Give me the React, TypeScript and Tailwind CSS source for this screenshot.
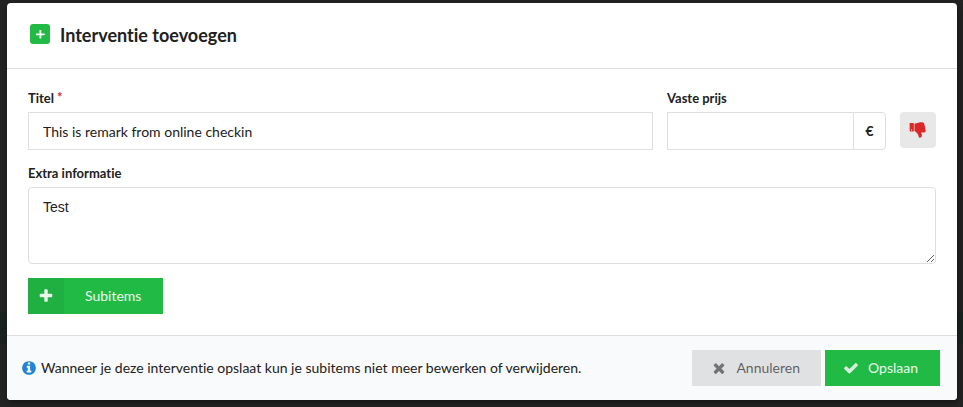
import type { ReactNode } from "react";

function Glyph({ className, children }: { className: string; children: ReactNode }) {
  return (
    <svg viewBox="0 0 1792 1792" fill="currentColor" aria-hidden="true" className={className}>
      {children}
    </svg>
  );
}

const plusPath =
  "M1600 736v192q0 40-28 68t-68 28h-416v416q0 40-28 68t-68 28h-192q-40 0-68-28t-28-68v-416h-416q-40 0-68-28t-28-68v-192q0-40 28-68t68-28h416v-416q0-40 28-68t68-28h192q40 0 68 28t28 68v416h416q40 0 68 28t28 68z";
const timesPath =
  "M1490 1322q0 40-28 68l-136 136q-28 28-68 28t-68-28l-294-294-294 294q-28 28-68 28t-68-28l-136-136q-28-28-28-68t28-68l294-294-294-294q-28-28-28-68t28-68l136-136q28-28 68-28t68 28l294 294 294-294q28-28 68-28t68 28l136 136q28 28 28 68t-28 68l-294 294 294 294q28 28 28 68z";
const checkPath =
  "M1671 566q0 40-28 68l-724 724-136 136q-28 28-68 28t-68-28l-136-136-362-362q-28-28-28-68t28-68l136-136q28-28 68-28t68 28l294 295 656-657q28-28 68-28t68 28l136 136q28 28 28 68z";
const infoPath =
  "M1152 1376v-160q0-14-9-23t-23-9h-96v-512q0-14-9-23t-23-9h-320q-14 0-23 9t-9 23v160q0 14 9 23t23 9h96v320h-96q-14 0-23 9t-9 23v160q0 14 9 23t23 9h448q14 0 23-9t9-23zm-128-896v-160q0-14-9-23t-23-9h-192q-14 0-23 9t-9 23v160q0 14 9 23t23 9h192q14 0 23-9t9-23zm640 416q0 209-103 385.5t-279.5 279.5-385.5 103-385.5-103-279.5-279.5-103-385.5 103-385.5 279.5-279.5 385.5-103 385.5 103 279.5 279.5 103 385.5z";
const cuffPath =
  "M320 896q0-26-19-45t-45-19q-27 0-45.500 19t-18.500 45q0 27 18.500 45.500t45.500 18.500q26 0 45-18.500t19-45.500zm160-640v720q0 26-19 45t-45 19h-288q-26 0-45-19t-19-45v-720q0-26 19-45t45-19h288q26 0 45 19t19 45z";
const handPath =
  "M1609 811q55 61 55 149-1 78-57.500 135t-134.500 57h-277q4 14 8 24t11 22 10 18q18 37 27 57t19 58.500 10 76.500q0 24-.5 39t-5 45-12 50-24 45-40 40.500-60 26-82.500 10.500q-26 0-45-19-20-20-34-50t-19.500-52-12.500-61q-9-42-13.500-60.500t-17.500-48.500-31-48q-33-33-101-120-49-64-101-121t-76-59q-25-2-43-20.500t-18-43.500v-641q0-26 19-44.500t45-19.500q35-1 158-44 77-26 120.500-39.500t121.500-29 144-15.500h129q133 2 197 78 58 69 49 181 39 37 54 94 17 61 0 117 46 61 43 137 0 32-15 76z";

const labelClass = "mb-1 block text-[13px] leading-[19px] font-bold";

export default function App() {
  return (
    <div className="relative isolate min-h-screen bg-[#242424] pt-[3px] pr-[6px] pb-[7px] pl-[7px] font-['Lato','Liberation_Sans',sans-serif] text-sm text-[#212121] [font-variant-ligatures:none]">
      <div className="absolute inset-x-0 top-[312px] -z-10 h-8 bg-[#1b2320]" />
      <div
        role="dialog"
        aria-labelledby="dialog-title"
        className="overflow-hidden rounded bg-white shadow-[1px_3px_3px_0_rgba(0,0,0,0.2),1px_3px_15px_2px_rgba(0,0,0,0.2)]"
      >
        <header className="flex items-start gap-[10px] border-b border-[#dededf] px-[23px] pt-[18px] pb-[19px]">
          <span className="mt-[3px] flex size-5 items-center justify-center rounded-[3px] bg-[#21ba45] text-white">
            <svg viewBox="0 0 20 20" className="size-5" fill="none" stroke="currentColor" strokeWidth="1.8" aria-hidden="true">
              <path d="M10.4 6v8.600M6.100 10.300h8.600" />
            </svg>
          </span>
          <h1 id="dialog-title" className="text-lg leading-7 font-bold">
            Interventie toevoegen
          </h1>
        </header>

        <form className="m-0" onSubmit={(e) => e.preventDefault()}>
          <div className="flex flex-col gap-[14px] px-[21px] pt-5 pb-[21px]">
            <div className="flex items-end gap-[14px]">
              <div className="min-w-0 flex-1">
                <label htmlFor="titel" className={labelClass}>
                  Titel
                  <span className="ml-[3px] inline-block align-top leading-4 text-[#db2828]">*</span>
                </label>
                <input
                  id="titel"
                  type="text"
                  defaultValue="This is remark from online checkin"
                  className="block h-[38px] w-full border border-[#dededf] bg-white px-[14px] outline-none"
                />
              </div>
              <div className="w-[219px]">
                <label htmlFor="prijs" className={labelClass}>
                  Vaste prijs
                </label>
                <div className="flex h-[38px]">
                  <input
                    id="prijs"
                    type="text"
                    className="min-w-0 flex-1 border border-r-0 border-[#dededf] bg-white px-[14px] outline-none"
                  />
                  <span className="flex w-[33px] items-center justify-center rounded-r border border-[#dededf] font-bold">
                    €
                  </span>
                </div>
              </div>
              <div className="h-[38px]">
                <button
                  type="button"
                  aria-label="Afkeuren"
                  className="flex size-9 items-center justify-center rounded bg-[#e8e8e8] text-[#db2828]"
                >
                  <Glyph className="size-[18px]">
                    <path d={cuffPath} />
                    <path d={handPath} />
                  </Glyph>
                </button>
              </div>
            </div>

            <div>
              <label htmlFor="extra" className={labelClass}>
                Extra informatie
              </label>
              <textarea
                id="extra"
                defaultValue="Test"
                className="block h-[77px] w-full resize-y rounded border border-[#dededf] bg-white px-[14px] py-[10px] font-['Liberation_Sans',sans-serif] leading-[18px] outline-none"
              />
            </div>

            <button type="button" className="flex h-9 items-center self-start bg-[#21ba45] text-white/90">
              <span className="flex size-9 items-center justify-center bg-black/5">
                <Glyph className="size-4">
                  <path d={plusPath} />
                </Glyph>
              </span>
              <span className="pr-[22px] pl-[21px]">Subitems</span>
            </button>
          </div>

          <footer className="flex items-center border-t border-[#dededf] bg-[#f9fafb] py-[14px] pr-[17px] pl-[14px]">
            <p className="flex flex-1 items-center gap-1">
              <Glyph className="size-4 text-[#2185d0]">
                <path d={infoPath} />
              </Glyph>
              Wanneer je deze interventie opslaat kun je subitems niet meer bewerken of verwijderen.
            </p>
            <div className="flex gap-1">
              <button type="button" className="flex h-9 items-center gap-[9px] bg-[#e0e1e2] pr-[21px] pl-[19px] text-black/60">
                <Glyph className="size-4 opacity-80">
                  <path d={timesPath} />
                </Glyph>
                Annuleren
              </button>
              <button type="submit" className="flex h-9 items-center gap-[9px] bg-[#21ba45] pr-[22px] pl-[18px] text-white/90">
                <Glyph className="size-4 opacity-90">
                  <path d={checkPath} />
                </Glyph>
                Opslaan
              </button>
            </div>
          </footer>
        </form>
      </div>
    </div>
  );
}
